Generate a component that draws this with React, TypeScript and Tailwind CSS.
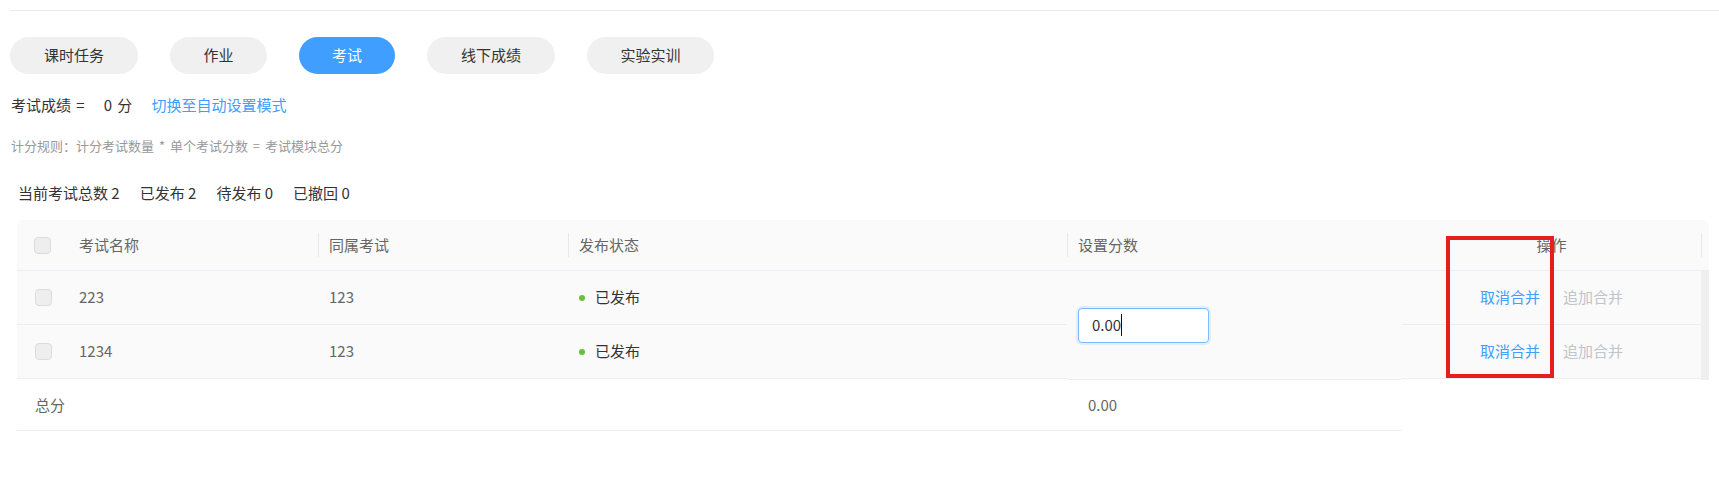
import React from "react";

const tabs = [
  { label: "课时任务", w: "w-[128px]", active: false },
  { label: "作业", w: "w-[97px]", active: false },
  { label: "考试", w: "w-[96px]", active: true },
  { label: "线下成绩", w: "w-[128px]", active: false },
  { label: "实验实训", w: "w-[127px]", active: false },
];

const rows = [
  { name: "223", group: "123" },
  { name: "1234", group: "123" },
];

function Checkbox() {
  return <span className="block h-[17px] w-[17px] rounded-[4px] border border-[#dcdcdc] bg-[#eeeeee]" />;
}

function HeadSep() {
  return <span className="h-[24px] w-px bg-[#e8e8e8]" />;
}

export default function App() {
  return (
    <div className="relative h-[485px] w-[1719px] overflow-hidden bg-white font-['Noto_Sans_CJK_SC','Noto_Sans',sans-serif] text-[15px] text-[#333]">
      <div className="pl-[10px] pt-[10px]">
        <div className="border-t border-[#ebebeb]" />
      </div>

      <div className="mt-[26px] flex gap-[32px] pl-[10px]">
        {tabs.map((t) => (
          <div
            key={t.label}
            className={
              t.active
                ? `${t.w} flex h-[37px] items-center justify-center rounded-full bg-[#409eff] text-white`
                : `${t.w} flex h-[37px] items-center justify-center rounded-full bg-[#f0f0f0] text-[#333]`
            }
          >
            {t.label}
          </div>
        ))}
      </div>

      <div className="mt-[19px] flex h-[24px] items-center pl-[11px] leading-[24px] [word-spacing:2px]">
        <span>考试成绩 =</span>
        <span className="ml-[19px]">0 分</span>
        <span className="ml-[19px] text-[#409eff]">切换至自动设置模式</span>
      </div>

      <div className="mt-[19px] pl-[11px] text-[13px] leading-[20px] text-[#999] [word-spacing:2px]">
        计分规则：计分考试数量 * 单个考试分数 = 考试模块总分
      </div>

      <div className="mt-[25px] flex h-[24px] items-center gap-[20px] pl-[18px] leading-[24px]">
        <span>当前考试总数 2</span>
        <span>已发布 2</span>
        <span>待发布 0</span>
        <span>已撤回 0</span>
      </div>

      <div className="ml-[17px] mt-[15px] w-[1692px]">
        {/* header */}
        <div className="flex h-[51px] items-center rounded-t-[6px] border-b border-[#ebeef5] bg-[#fafafa] text-[#666]">
          <div className="flex h-full w-[51px] items-center pl-[17px]">
            <Checkbox />
          </div>
          <div className="flex h-full w-[250px] items-center pl-[11px]">考试名称</div>
          <div className="flex h-full w-[250px] items-center">
            <HeadSep />
            <span className="ml-[10px]">同属考试</span>
          </div>
          <div className="flex h-full w-[499px] items-center">
            <HeadSep />
            <span className="ml-[10px]">发布状态</span>
          </div>
          <div className="flex h-full w-[335px] items-center">
            <HeadSep />
            <span className="ml-[10px]">设置分数</span>
          </div>
          <div className="flex h-full w-[299px] items-center justify-center">操作</div>
          <HeadSep />
          <div className="w-[7px]" />
        </div>

        {/* body */}
        <div className="flex">
          <div className="w-[1050px]">
            {rows.map((r) => (
              <div key={r.name} className="flex h-[54px] items-center border-b border-[#ebeef5] bg-[#fafafa]">
                <div className="flex w-[51px] items-center pl-[18px]">
                  <Checkbox />
                </div>
                <div className="w-[250px] pl-[11px] text-[#666]">{r.name}</div>
                <div className="w-[250px] pl-[11px] text-[#666]">{r.group}</div>
                <div className="flex w-[499px] items-center pl-[11px] text-[#333]">
                  <span className="h-[6px] w-[6px] rounded-full bg-[#67c23a]" />
                  <span className="ml-[10px]">已发布</span>
                </div>
              </div>
            ))}
          </div>
          <div className="flex h-[109px] w-[335px] items-center border-b border-[#ebeef5] bg-[#fafafa] pl-[11px]">
            <div className="flex h-[35px] w-[131px] items-center rounded-[4px] border border-[#79bbff] bg-white pl-[13px] text-[#333] shadow-[0_0_0_2px_rgba(64,158,255,0.12)]">
              <span>0.00</span>
              <span className="h-[22px] w-px bg-[#111]" />
            </div>
          </div>
          <div className="w-[299px]">
            {rows.map((r) => (
              <div key={r.name} className="flex h-[54px] items-center justify-center gap-[23px] border-b border-[#ebeef5] bg-[#fafafa]">
                <span className="text-[#409eff]">取消合并</span>
                <span className="text-[#c0c4cc]">追加合并</span>
              </div>
            ))}
          </div>
          <div className="h-[109px] w-[8px] border-b border-[#ebeef5] bg-[#efefef]" />
        </div>

        {/* footer */}
        <div className="flex h-[51px] w-[1385px] items-center border-b border-[#ebeef5] bg-white text-[#666]">
          <div className="w-[1050px] pl-[18px]">总分</div>
          <div className="w-[335px] pl-[21px]">0.00</div>
        </div>
      </div>

      <div className="absolute left-[1446px] top-[236px] h-[142px] w-[108px] border-[4px] border-[#e61e1e]" />
    </div>
  );
}
